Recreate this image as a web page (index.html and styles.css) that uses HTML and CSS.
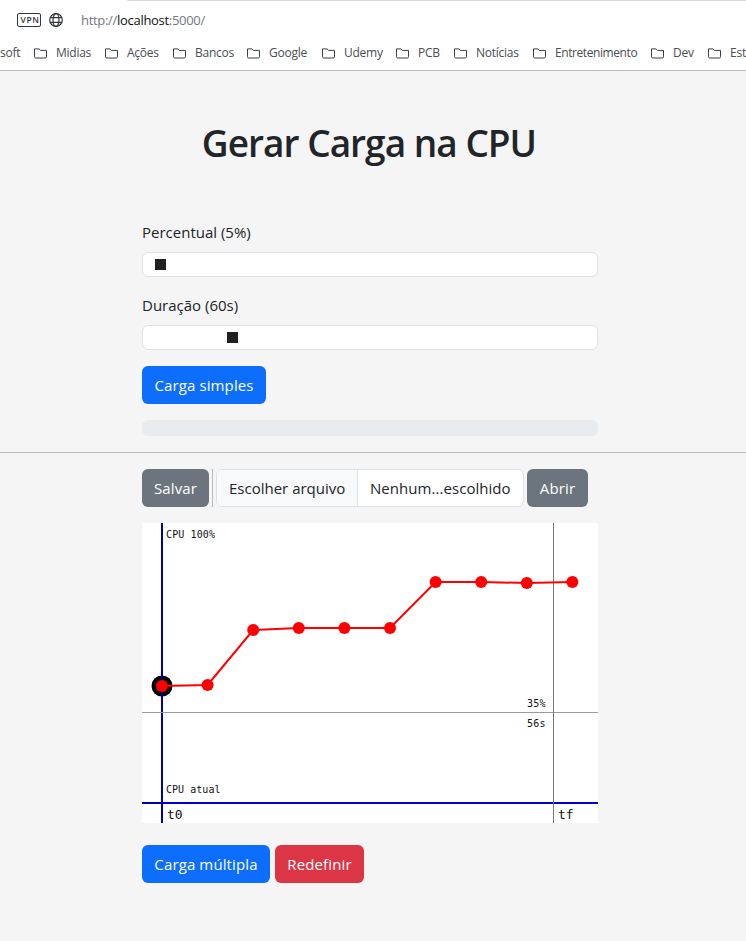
FILE: index.html
```html
<!DOCTYPE html>
<html lang="pt-BR">
<head>
<meta charset="utf-8">
<title>Gerar Carga na CPU</title>
<link rel="stylesheet" href="styles.css">
</head>
<body>
<svg class="defs" width="0" height="0"><defs>
<symbol id="folder" viewBox="0 0 13 11"><path d="M.5 .9h4.500l1.600 1.500h5.900v6.400q0 1.200-1.200 1.200H1.700Q.5 10 .5 8.800z" fill="none" stroke="#3b3e43" stroke-width="1"/></symbol>
</defs></svg>
<header class="browser">
  <div class="tab-line"></div>
  <div class="address">
    <span class="vpn">VPN</span>
    <svg class="globe" width="14" height="14" viewBox="0 0 14 14" fill="none" stroke="#33373d" stroke-width="1.2"><circle cx="7" cy="7" r="6.3"/><ellipse cx="7" cy="7" rx="3" ry="6.3"/><path d="M1.300 4.600h11.400M1.300 9.400h11.400"/></svg>
    <span class="url">http://<b>localhost</b>:5000/</span>
  </div>
  <nav class="bookmarks">
    <span>soft</span>
    <span><svg class="folder"><use href="#folder"/></svg>Midias</span>
    <span><svg class="folder"><use href="#folder"/></svg>Ações</span>
    <span><svg class="folder"><use href="#folder"/></svg>Bancos</span>
    <span><svg class="folder"><use href="#folder"/></svg>Google</span>
    <span><svg class="folder"><use href="#folder"/></svg>Udemy</span>
    <span><svg class="folder"><use href="#folder"/></svg>PCB</span>
    <span><svg class="folder"><use href="#folder"/></svg>Notícias</span>
    <span class="long"><svg class="folder"><use href="#folder"/></svg>Entretenimento</span>
    <span><svg class="folder"><use href="#folder"/></svg>Dev</span>
    <span><svg class="folder"><use href="#folder"/></svg>Est</span>
  </nav>
</header>
<section class="simple">
  <h1>Gerar Carga na CPU</h1>
  <div class="column">
    <label>Percentual (5%)</label>
    <div class="slider"><i class="thumb"></i></div>
    <label>Duração (60s)</label>
    <div class="slider duration"><i class="thumb"></i></div>
    <button class="btn primary run">Carga simples</button>
    <div class="progress"></div>
  </div>
</section>
<section class="multiple column">
  <div class="toolbar">
    <button class="btn secondary save">Salvar</button>
    <span class="rule"></span>
    <div class="file"><span class="choose">Escolher arquivo</span><span class="chosen">Nenhum...escolhido</span></div>
    <button class="btn secondary open">Abrir</button>
  </div>
  <svg class="chart" width="456" height="300" viewBox="0 0 456 300">
    <rect width="456" height="300" fill="#fff"/>
    <circle cx="20" cy="163" r="10.500" fill="#000"/>
    <path d="M20 0v300M0 280h456" stroke="#00a" stroke-width="2"/>
    <path d="M21 280h435" stroke="#0000c8" stroke-width="2"/>
    <path d="M0 189.500h456" stroke="#9b9b9b"/>
    <path d="M411.500 0v300" stroke="#777"/>
    <path d="M20 163l45.600-1L111.200 107l45.600-2h91.200L293.600 59h45.600l45.600 1L430.400 59" fill="none" stroke="#f00" stroke-width="2"/>
    <g fill="#f00"><circle cx="20" cy="163" r="6"/><circle cx="65.600" cy="162" r="6"/><circle cx="111.200" cy="107" r="6"/><circle cx="156.800" cy="105" r="6"/><circle cx="202.400" cy="105" r="6"/><circle cx="248" cy="105" r="6"/><circle cx="293.600" cy="59" r="6"/><circle cx="339.200" cy="59" r="6"/><circle cx="384.800" cy="60" r="6"/><circle cx="430.400" cy="59" r="6"/></g>
    <g class="small">
      <text x="24" y="15" textLength="49">CPU 100%</text>
      <text x="24" y="270" textLength="54.500">CPU atual</text>
      <text x="385" y="184" textLength="18.500">35%</text>
      <text x="385" y="204" textLength="18.500">56s</text>
    </g>
    <g class="big">
      <text x="25" y="296" textLength="15.500">t0</text>
      <text x="416" y="296" textLength="15.500">tf</text>
    </g>
  </svg>
  <div class="actions">
    <button class="btn primary multi">Carga múltipla</button>
    <button class="btn danger">Redefinir</button>
  </div>
</section>
</body>
</html>
```
FILE: styles.css
```css
* { box-sizing: border-box; }
body { margin: 0; height: 941px; overflow: hidden; background: #f5f5f5; color: #212529; font: 15px/24px "Open Sans", "Noto Sans", sans-serif; }
.defs { display: none; }
.browser { height: 71px; background: #fff; border-bottom: 1px solid #b9bbbe; overflow: hidden; }
.tab-line { height: 1px; margin-left: 127px; background: #d5d8dd; }
.address { display: flex; align-items: center; height: 38px; padding-left: 17px; }
.vpn { width: 24px; height: 14px; border: 1px solid #33373d; border-radius: 2px; font: 600 8.5px/12px "Open Sans", sans-serif; letter-spacing: .6px; padding-left: 2.5px; color: #33373d; }
.globe { margin: 0 18px 0 8px; }
.url { font-size: 13px; letter-spacing: -.3px; color: #747980; }
.url b { font-weight: 400; color: #111; }
.bookmarks { display: grid; grid-template-columns: 34px 71px 68px 74px 75px 74px 58px 79px 118px 57px 60px; font-size: 12px; line-height: 20px; letter-spacing: -.25px; padding-top: 4px; color: #4a4d52; white-space: nowrap; }
.bookmarks span { display: flex; align-items: center; }
.bookmarks .long { letter-spacing: -.42px; }
.folder { width: 13px; height: 11px; margin-right: 9px; flex: none; }
h1 { margin: 0; padding-top: 48px; height: 149px; text-align: center; font-size: 37px; line-height: 48px; font-weight: 600; letter-spacing: -.98px; padding-right: 8px; }
.simple { height: 382px; border-bottom: 1px solid #bbb; }
.column { width: 456px; margin-left: 142px; }
label { display: block; height: 32px; }
.slider { height: 25px; margin-bottom: 16px; padding: 6px 12px; border: 1px solid #dee2e6; border-radius: 6px; background: #fff; }
.slider.duration { padding-left: 84px; }
.thumb { display: block; width: 11px; height: 11px; background: #212121; }
.btn { height: 38px; border: 0; border-radius: 6px; padding: 0; color: #fff; font: inherit; letter-spacing: .12px; white-space: nowrap; }
.primary { background: #0d6efd; }
.secondary { background: #6c757d; }
.danger { background: #dc3545; width: 89px; }
.run { display: block; width: 124px; }
.progress { height: 16px; margin-top: 16px; border-radius: 6px; background: #e9ecef; }
.toolbar { display: flex; padding-top: 16px; height: 70px; }
.toolbar > * { height: 38px; }
.save { width: 67px; }
.rule { width: 1px; margin: 0 3px; background: #bbb; }
.file { display: flex; width: 308px; margin-right: 3px; border: 1px solid #dee2e6; border-radius: 6px; overflow: hidden; background: #fff; line-height: 36px; white-space: nowrap; }
.choose { width: 141px; padding-left: 12px; border-right: 1px solid #dee2e6; background: #f8f9fa; }
.chosen { padding-left: 12px; letter-spacing: .05px; }
.open { width: 61px; }
.chart { display: block; }
.small, .big { font-family: "DejaVu Sans Mono", monospace; fill: #111; }
.small { font-size: 10px; }
.big { font-size: 13px; }
.actions { display: flex; gap: 5px; margin-top: 22px; }
.multi { width: 128px; }
```
